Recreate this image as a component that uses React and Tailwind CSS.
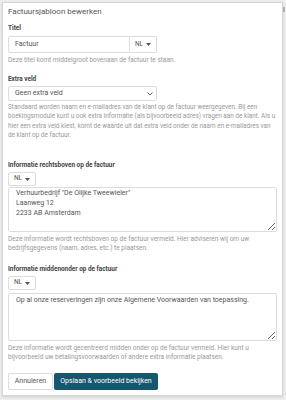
import React from "react";

function Caret() {
  return (
    <svg width="5" height="3" viewBox="0 0 5 3" className="ml-[3px]">
      <path d="M0 0 L5 0 L2.5 3 Z" fill="#555" />
    </svg>
  );
}

function NLButton() {
  return (
    <div className="flex h-[14px] w-[28px] items-center justify-center rounded-[2px] border border-[#dcdcdc] bg-white text-[6.5px] text-[#555]">
      NL
      <Caret />
    </div>
  );
}

export default function App() {
  return (
    <div
      className="relative min-h-[400px] w-[286px] bg-[#ececec] pl-[2px] pr-[3px] pt-[2px]"
      style={{ fontFamily: "Roboto, 'Liberation Sans', sans-serif" }}
    >
      <div className="absolute right-[1px] top-[7px] h-[5px] w-[2px] bg-[#b5b5b5]" />
      <div className="relative h-[394px] border border-[#d6d6d6] bg-white px-[5px] pt-[3px] shadow-[0_1px_2px_rgba(0,0,0,0.12)]">
        <div className="text-[8px] leading-[12px] text-[#555]">Factuursjabloon bewerken</div>

        <div className="mt-[6px] text-[6.4px] font-bold leading-[9px] text-[#444]">Titel</div>
        <div className="mt-[3px] flex h-[17px] w-[149px]">
          <div className="flex flex-1 items-center rounded-l-[2px] border border-[#dcdcdc] pl-[6px] text-[7px] text-[#555]">
            Factuur
          </div>
          <div className="flex w-[27px] items-center justify-center rounded-r-[2px] border border-l-0 border-[#dcdcdc] text-[6.5px] text-[#555]">
            NL
            <Caret />
          </div>
        </div>
        <div className="mt-[3px] text-[6.5px] leading-[9px] text-[#999]">
          Deze titel komt middelgroot bovenaan de factuur te staan.
        </div>

        <div className="mt-[10px] text-[6.4px] font-bold leading-[9px] text-[#444]">Extra veld</div>
        <div className="mt-[2px] flex h-[15px] w-[149px] items-center justify-between rounded-[2px] border border-[#dcdcdc] pl-[6px] pr-[3px] text-[7px] text-[#555]">
          <span>Geen extra veld</span>
          <svg width="6" height="4" viewBox="0 0 6 4">
            <path d="M0.5 0.5 L3 3 L5.5 0.5" fill="none" stroke="#555" strokeWidth="0.9" />
          </svg>
        </div>
        <div className="mt-[2px] whitespace-nowrap text-[6.4px] leading-[9.3px] text-[#999]">
          <div>Standaard worden naam en e-mailadres van de klant op de factuur weergegeven. Bij een</div>
          <div>boekingsmodule kunt u ook extra informatie (als bijvoorbeeld adres) vragen aan de klant. Als u</div>
          <div>hier een extra veld kiest, komt de waarde uit dat extra veld onder de naam en e-mailadres van</div>
          <div>de klant op de factuur.</div>
        </div>

        <div className="mt-[21px] text-[6.4px] font-bold leading-[9px] text-[#444]">
          Informatie rechtsboven op de factuur
        </div>
        <div className="mt-[2px]">
          <NLButton />
        </div>
        <textarea
          readOnly
          className="mt-[1px] block h-[45px] w-full resize-y rounded-[2px] border border-[#dcdcdc] px-[7px] pt-[1px] text-[7px] leading-[9.7px] text-[#555] outline-none"
          defaultValue={'Verhuurbedrijf "De Olijke Tweewieler"\nLaanweg 12\n2233 AB Amsterdam'}
        />
        <div className="mt-[3px] whitespace-nowrap text-[6.5px] leading-[9px] text-[#999]">
          <div>Deze informatie wordt rechtsboven op de factuur vermeld. Hier adviseren wij om uw</div>
          <div>bedrijfsgegevens (naam, adres, etc.) te plaatsen.</div>
        </div>

        <div className="mt-[12px] text-[6.4px] font-bold leading-[9px] text-[#444]">
          Informatie middenonder op de factuur
        </div>
        <div className="mt-[2px]">
          <NLButton />
        </div>
        <textarea
          readOnly
          className="mt-[3px] block h-[48px] w-full resize-y rounded-[2px] border border-[#dcdcdc] px-[7px] pt-[2px] text-[7px] leading-[9.7px] text-[#555] outline-none"
          defaultValue={"Op al onze reserveringen zijn onze Algemene Voorwaarden van toepassing."}
        />
        <div className="mt-[3px] whitespace-nowrap text-[6.5px] leading-[9.2px] text-[#999]">
          <div>Deze informatie wordt gecentreerd midden onder op de factuur vermeld. Hier kunt u</div>
          <div>bijvoorbeeld uw betalingsvoorwaarden of andere extra informatie plaatsen.</div>
        </div>

        <div className="mt-[10px] flex gap-[1px]">
          <div className="flex h-[17px] w-[45px] items-center justify-center rounded-[2px] border border-[#dcdcdc] bg-white text-[7px] text-[#555]">
            Annuleren
          </div>
          <div className="flex h-[17px] w-[104px] items-center justify-center rounded-[2px] bg-[#16576f] text-[7px] text-white">
            Opslaan &amp; voorbeeld bekijken
          </div>
        </div>
      </div>
    </div>
  );
}
